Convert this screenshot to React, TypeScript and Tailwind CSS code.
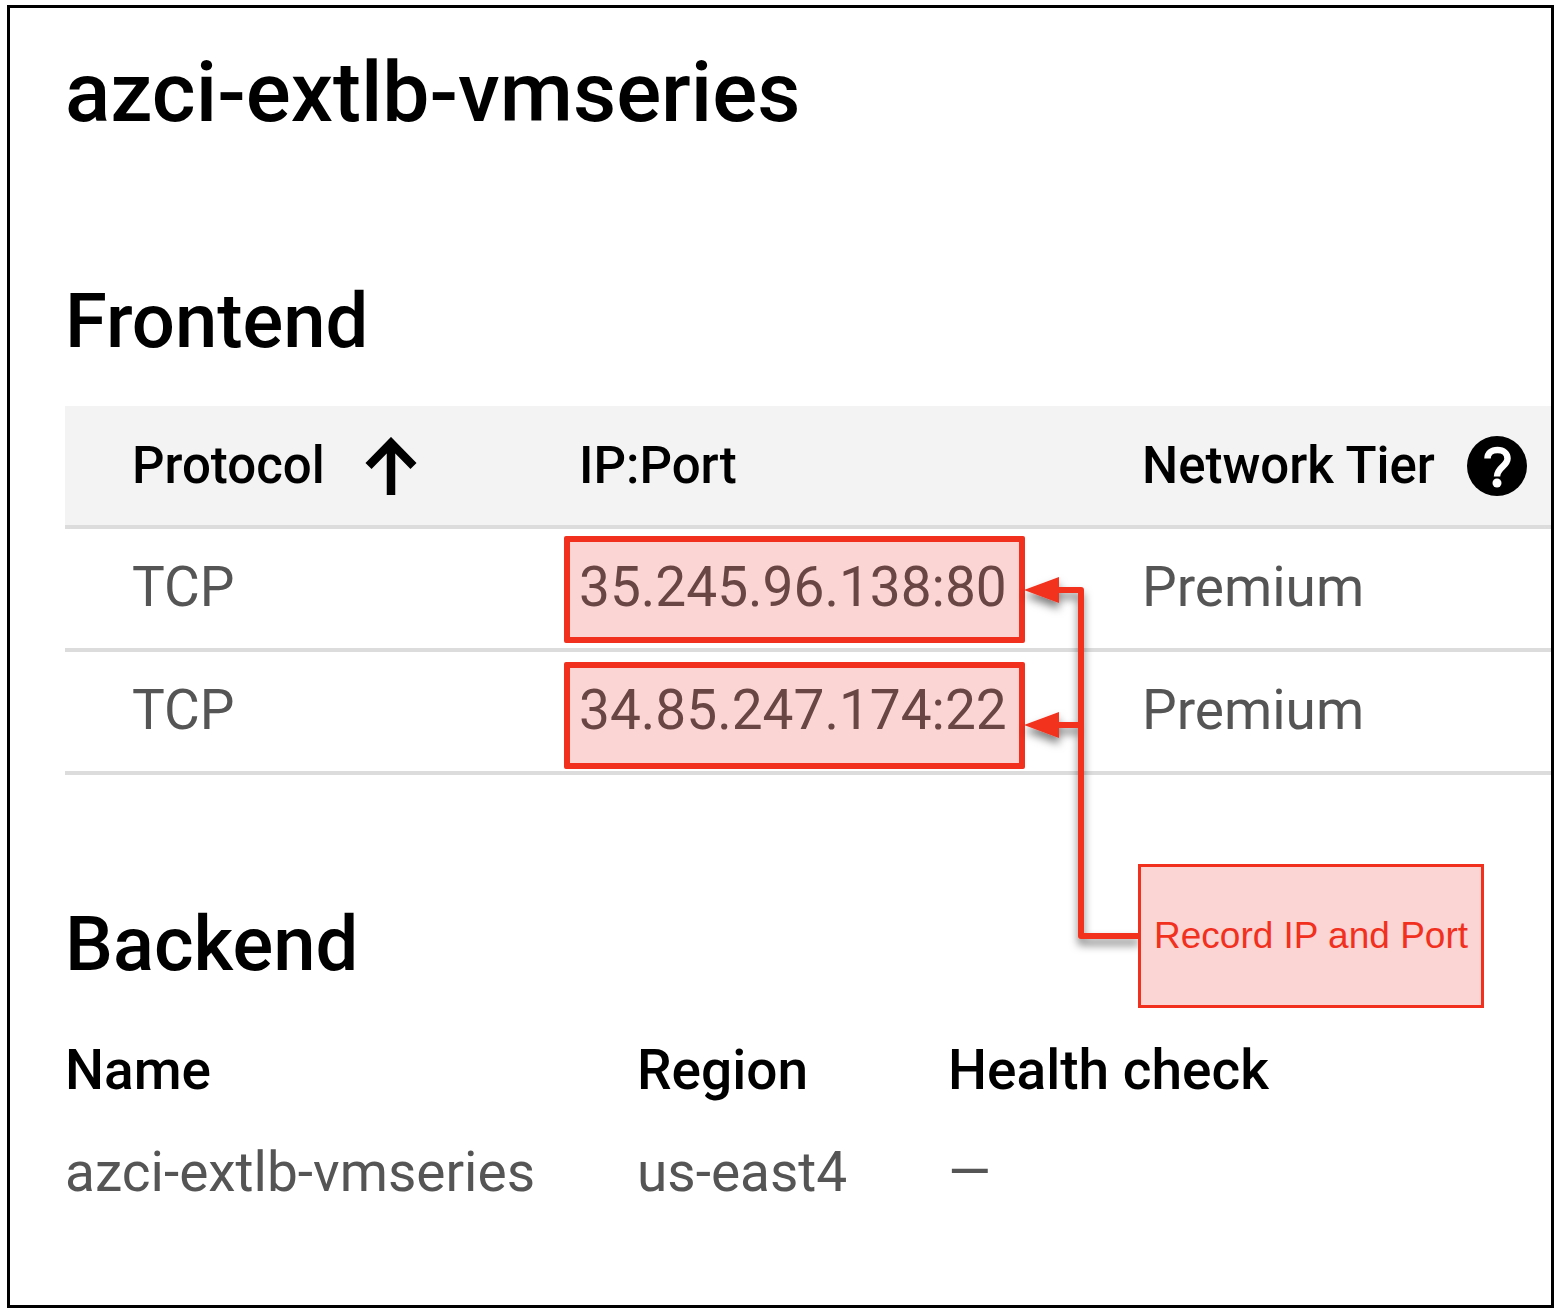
import React from "react";

const frontends = [
  { protocol: "TCP", address: "35.245.96.138:80", tier: "Premium", highlight: "top-[7px]" },
  { protocol: "TCP", address: "34.85.247.174:22", tier: "Premium", highlight: "top-[10px]" },
];

function ArrowUp() {
  return (
    <svg className="h-[58px] w-[52px] shrink-0" viewBox="0 0 52 58" fill="none" aria-hidden="true">
      <path d="M26 58V7M3.5 29L26 6L48.5 29" stroke="#000" strokeWidth="8.5" />
    </svg>
  );
}

function HelpIcon() {
  return (
    <svg className="h-[60px] w-[60px]" viewBox="0 0 60 60" fill="none" aria-hidden="true">
      <circle cx="30" cy="30" r="30" fill="#000" />
      <path
        d="M20.500 22.500C20.500 17 24.500 14 30.500 14C36.500 14 40.500 17.500 40.500 22.500C40.500 30 30 31.500 30 40.500"
        stroke="#fff"
        strokeWidth="6.500"
      />
      <circle cx="30" cy="47" r="4.500" fill="#fff" />
    </svg>
  );
}

function Connector() {
  return (
    <svg
      className="pointer-events-none absolute left-[950px] top-[160px] h-[400px] w-[130px] overflow-visible"
      viewBox="0 0 130 400"
      fill="none"
      aria-hidden="true"
    >
      <defs>
        <filter id="shadow" x="-20" y="-20" width="180" height="440" filterUnits="userSpaceOnUse">
          <feDropShadow dx="0" dy="6" stdDeviation="4" floodColor="#000" floodOpacity="0.5" />
        </filter>
      </defs>
      <g filter="url(#shadow)">
        <path d="M124 370H66V24H42M66 159H42" stroke="#f2301e" strokeWidth="6" strokeLinejoin="round" />
        <path d="M9 24L44 11V37Z" fill="#f2301e" />
        <path d="M9 159L44 146V172Z" fill="#f2301e" />
      </g>
    </svg>
  );
}

export default function App() {
  return (
    <div className="min-h-screen bg-white pt-[5px] pr-3 pb-2 pl-[7px] font-['Roboto',sans-serif] text-black">
      <main className="overflow-hidden border-3 border-black pt-[35px] pb-[101px] pl-[55px]">
        <h1 className="text-[84px] leading-[100px] font-medium">azci-extlb-vmseries</h1>

        <section className="mt-[133px]">
          <h2 className="text-[76px] leading-[90px] font-medium">Frontend</h2>
          <div className="relative mt-10">
            <table className="w-full table-fixed border-collapse text-left whitespace-nowrap">
              <colgroup>
                <col className="w-[514px]" />
                <col className="w-[563px]" />
                <col />
              </colgroup>
              <thead>
                <tr className="h-[121px] border-b-4 border-[#dcdcdc] bg-[#f3f3f3] text-[51px] leading-[64px]">
                  <th scope="col" className="p-0 pl-[67px] font-medium">
                    <button type="button" className="flex items-center gap-10">
                      Protocol
                      <ArrowUp />
                    </button>
                  </th>
                  <th scope="col" className="p-0 font-medium">IP:Port</th>
                  <th scope="col" className="p-0 font-medium">
                    <div className="flex items-center gap-8">
                      Network Tier
                      <button type="button" aria-label="About network tiers">
                        <HelpIcon />
                      </button>
                    </div>
                  </th>
                </tr>
              </thead>
              <tbody>
                {frontends.map((row) => (
                  <tr
                    key={row.address}
                    className="h-[123px] border-b-4 border-[#dcdcdc] text-[55px] leading-[64px] text-[#555]"
                  >
                    <td className="p-0 pb-1 pl-[67px]">{row.protocol}</td>
                    <td className="relative p-0 pb-1 text-[#494b4b]">
                      {row.address}
                      <span
                        className={`absolute -left-[15px] h-[107px] w-[461px] rounded-xs border-6 border-[#f2301e] bg-[#ec2d2a]/20 ${row.highlight}`}
                      />
                    </td>
                    <td className="p-0 pb-1">{row.tier}</td>
                  </tr>
                ))}
              </tbody>
            </table>
            <Connector />
            <aside className="absolute top-[458px] left-[1073px] flex h-[144px] w-[346px] items-center justify-center border-3 border-[#f2301e] bg-[#fbd5d4] font-['Liberation_Sans',sans-serif] text-[37px] leading-[40px] whitespace-nowrap text-[#f2301e]">
              Record IP and Port
            </aside>
          </div>
        </section>

        <section className="mt-[124px]">
          <h2 className="text-[76px] leading-[90px] font-medium">Backend</h2>
          <table className="mt-[49px] w-full table-fixed border-collapse text-left whitespace-nowrap">
            <colgroup>
              <col className="w-[572px]" />
              <col className="w-[311px]" />
              <col />
            </colgroup>
            <thead>
              <tr className="text-[55px] leading-[64px]">
                <th scope="col" className="p-0 pb-[38px] font-medium">Name</th>
                <th scope="col" className="p-0 pb-[38px] font-medium">Region</th>
                <th scope="col" className="p-0 pb-[38px] font-medium">Health check</th>
              </tr>
            </thead>
            <tbody>
              <tr className="text-[55px] leading-[64px] text-[#555]">
                <td className="p-0">azci-extlb-vmseries</td>
                <td className="p-0">us-east4</td>
                <td className="p-0">—</td>
              </tr>
            </tbody>
          </table>
        </section>
      </main>
    </div>
  );
}
